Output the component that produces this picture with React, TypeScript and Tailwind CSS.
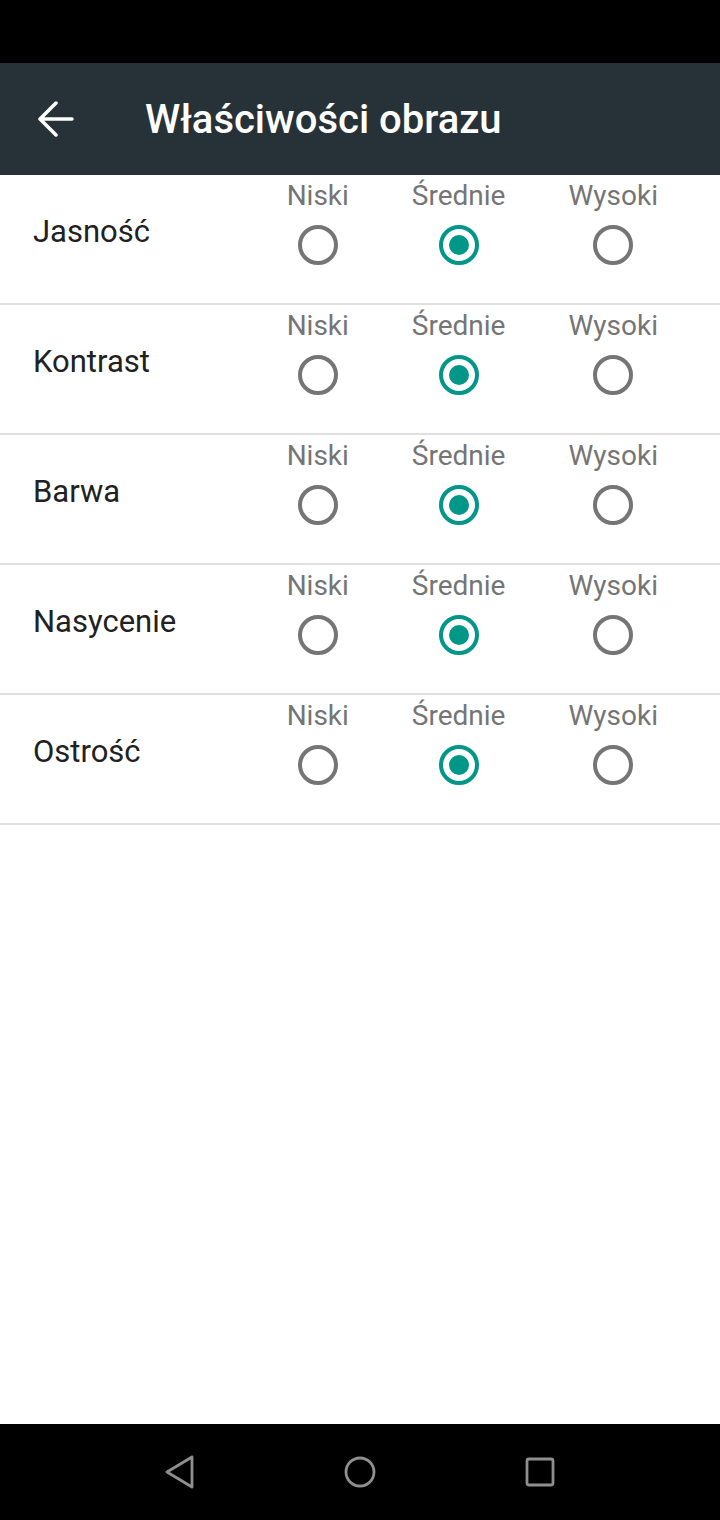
const settings = ['Jasność', 'Kontrast', 'Barwa', 'Nasycenie', 'Ostrość'];
const levels = ['Niski', 'Średnie', 'Wysoki'];

function Radio({ checked }: { checked: boolean }) {
  return (
    <div
      className={`w-10 h-10 rounded-full border-4 flex items-center justify-center ${
        checked ? 'border-[#009688]' : 'border-[#757575]'
      }`}
    >
      {checked && <div className="w-5 h-5 rounded-full bg-[#009688]" />}
    </div>
  );
}

export default function App() {
  return (
    <div className="w-[720px] h-[1520px] flex flex-col bg-white font-['Roboto',sans-serif]">
      {/* Status bar */}
      <div className="h-[63px] bg-black shrink-0" />

      {/* Toolbar */}
      <div className="h-[112px] bg-[#263238] flex items-center shrink-0">
        <div className="w-[112px] flex items-center pl-[38px]">
          <svg width="36" height="36" viewBox="0 0 36 36">
            <path
              d="M34 18H3 M18 2 L2 18 L18 34"
              fill="none"
              stroke="white"
              strokeWidth="3.5"
              strokeLinecap="round"
              strokeLinejoin="round"
            />
          </svg>
        </div>
        <h1 className="text-white text-[40px] font-medium leading-none ml-[33px] mt-[2px]">
          Właściwości obrazu
        </h1>
      </div>

      {/* Rows */}
      <div className="flex-1">
        {settings.map((name) => (
          <div key={name} className="h-[130px] flex border-b-2 border-[#e0e0e0]">
            <div className="flex-1 pl-[33px] pt-[37px] text-[31px] leading-[40px] text-[#212121]">
              {name}
            </div>
            <div className="flex gap-[63px] pr-[62px] pt-[2px]">
              {levels.map((lvl) => (
                <div key={lvl} className="flex flex-col items-center">
                  <span className="text-[28px] leading-[38px] text-[#757575]">{lvl}</span>
                  <div className="mt-[10px]">
                    <Radio checked={lvl === 'Średnie'} />
                  </div>
                </div>
              ))}
            </div>
          </div>
        ))}
      </div>

      {/* Navigation bar */}
      <div className="h-[96px] bg-black shrink-0 grid grid-cols-3 px-[90px]">
        <div className="flex items-center justify-center">
          <svg width="30" height="34" viewBox="0 0 30 34">
            <path d="M27 2 L2 17 L27 32 Z" fill="none" stroke="#8f8f8f" strokeWidth="2.8" strokeLinejoin="round" />
          </svg>
        </div>
        <div className="flex items-center justify-center">
          <svg width="34" height="34" viewBox="0 0 34 34">
            <circle cx="17" cy="17" r="14" fill="none" stroke="#8f8f8f" strokeWidth="2.8" />
          </svg>
        </div>
        <div className="flex items-center justify-center">
          <svg width="30" height="30" viewBox="0 0 30 30">
            <rect x="2" y="2" width="26" height="26" rx="2" fill="none" stroke="#8f8f8f" strokeWidth="2.8" />
          </svg>
        </div>
      </div>
    </div>
  );
}
